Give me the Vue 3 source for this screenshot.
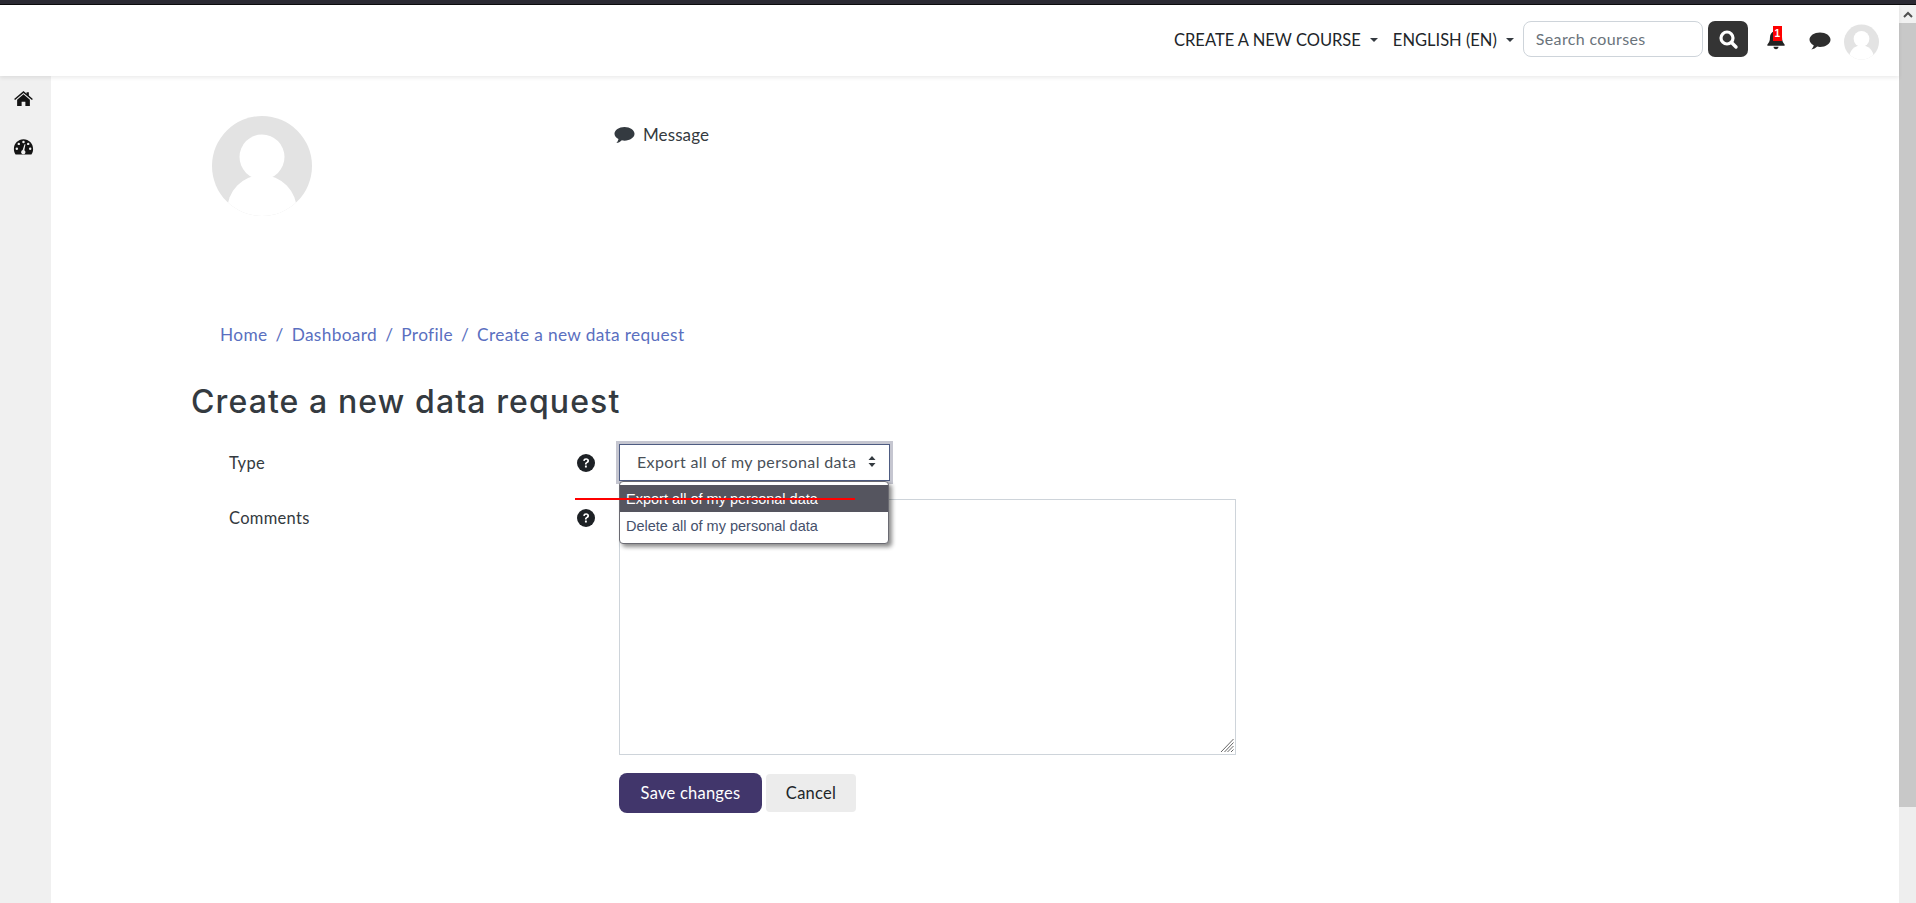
<script setup>
const crumbs = ['Home', 'Dashboard', 'Profile', 'Create a new data request']
</script>

<template>
  <div class="shell">
    <div class="strip"></div>
    <div class="body-row">
      <div class="page">
        <header class="navbar">
          <a class="nav-link">CREATE A NEW COURSE<span class="caret"></span></a>
          <a class="nav-link lang">ENGLISH (EN)<span class="caret"></span></a>
          <div class="search-box"><span>Search courses</span></div>
          <button class="search-btn" aria-label="Search">
            <svg width="22" height="22" viewBox="0 0 22 22"><circle cx="10" cy="10" r="6" fill="none" stroke="#fff" stroke-width="3.200"/><path d="M14.500 14.500l4.500 4.500" stroke="#fff" stroke-width="3.400" stroke-linecap="round"/></svg>
          </button>
          <div class="bell">
            <svg width="20" height="22" viewBox="0 0 20 23"><path d="M10 1.500c1 0 1.700.8 1.600 1.900 3 .7 4.700 3.200 4.700 6.300 0 4 .9 5.600 2.700 7.500v1.300H1v-1.300c1.800-1.900 2.700-3.500 2.700-7.500 0-3.100 1.700-5.600 4.700-6.300-.1-1.100.6-1.900 1.600-1.900z" fill="#222"/><path d="M7.400 19.500h5.200c0 1.500-1.100 2.600-2.600 2.600s-2.600-1.100-2.600-2.600z" fill="#222"/></svg>
            <span class="badge">1</span>
          </div>
          <svg class="chat" width="22" height="18" viewBox="0 0 22 18"><path d="M11 .5c5.800 0 10.500 3.200 10.500 7.200S16.800 14.900 11 14.900c-1 0-1.900-.1-2.800-.3C6.600 16.200 4.600 17.300 2.400 17.500c1.200-1.200 2-2.700 2.300-4.300C2.200 11.900.5 9.900.5 7.700.5 3.700 5.200.5 11 .5z" fill="#2e2e2e"/></svg>
          <svg class="nav-avatar" width="35" height="36" viewBox="0 0 100 100"><defs><clipPath id="nav-clip"><circle cx="50" cy="50" r="50"/></clipPath></defs><circle cx="50" cy="50" r="50" fill="#e3e3e3"/><g clip-path="url(#nav-clip)" fill="#fff"><circle cx="50" cy="41" r="22.500"/><ellipse cx="50" cy="95" rx="35" ry="36"/></g></svg>
        </header>
        <div class="below">
          <aside class="sidebar">
            <svg class="side-home" width="19" height="15" viewBox="0 0 20 16"><path d="M10 0l3.300 2.800V1.200h2.400v3.600L20 8.500l-1 1.100L10 2 1 9.600 0 8.500z" fill="#141414"/><path d="M10 3.400l6.800 5.800V16h-4.800v-4.500H8V16H3.200V9.200z" fill="#141414"/></svg>
            <svg class="side-gauge" width="21" height="16" viewBox="0 0 21 17"><path d="M10.500.3C4.800.3.300 4.900.3 10.500c0 2.200.6 4.200 1.800 6h16.800c1.200-1.800 1.800-3.800 1.800-6C20.700 4.900 16.200.3 10.500.3z" fill="#141414"/><g fill="#f0f0f0"><circle cx="10.500" cy="3.200" r="1.300"/><circle cx="5.500" cy="5.200" r="1.300"/><circle cx="15.500" cy="5.200" r="1.300"/><circle cx="3.400" cy="10.300" r="1.300"/><circle cx="17.600" cy="10.300" r="1.300"/><path d="M11.600 5.500l1 .2-1.200 6.300a2.300 2.300 0 1 1-1.800-.2z"/></g></svg>
          </aside>
          <main class="content">
            <div class="profile">
              <svg class="big-avatar" width="100" height="100" viewBox="0 0 100 100"><defs><clipPath id="big-clip"><circle cx="50" cy="50" r="50"/></clipPath></defs><circle cx="50" cy="50" r="50" fill="#e3e3e3"/><g clip-path="url(#big-clip)" fill="#fff"><circle cx="50" cy="41" r="22.500"/><ellipse cx="50" cy="95" rx="35" ry="36"/></g></svg>
              <a class="message">
                <svg width="21" height="18" viewBox="0 0 22 18"><path d="M11 .5c5.800 0 10.500 3.200 10.500 7.200S16.800 14.900 11 14.900c-1 0-1.900-.1-2.800-.3C6.600 16.200 4.600 17.300 2.400 17.500c1.200-1.200 2-2.700 2.300-4.300C2.200 11.900.5 9.900.5 7.700.5 3.700 5.200.5 11 .5z" fill="#343a40"/></svg>
                Message
              </a>
            </div>
            <nav class="crumbs">
              <template v-for="(c, i) in crumbs" :key="c">
                <span v-if="i" class="sep">/</span><a>{{ c }}</a>
              </template>
            </nav>
            <h1>Create a new data request</h1>
            <div class="form-row type-row">
              <label>Type</label>
              <svg class="help" width="18" height="18" viewBox="0 0 17 17"><circle cx="8.500" cy="8.500" r="8.500" fill="#1d2125"/><path d="M5.800 6.300c.2-1.500 1.300-2.300 2.800-2.300 1.600 0 2.800.9 2.800 2.300 0 1.200-.7 1.700-1.500 2.200-.6.400-.8.600-.8 1.300H7.500c0-1.300.4-1.800 1.200-2.300.6-.4 1-.7 1-1.200 0-.5-.5-.8-1.100-.8-.7 0-1.100.4-1.300 1z" fill="#fff"/><rect x="7.500" y="10.800" width="1.800" height="1.900" rx=".3" fill="#fff"/></svg>
              <div class="select-wrap">
                <div class="select">
                  <span>Export all of my personal data</span>
                  <svg width="10" height="13" viewBox="0 0 10 13"><path d="M5 1l3.500 4h-7zM5 12L1.500 8h7z" fill="#343a40"/></svg>
                </div>
                <ul class="popup">
                  <li class="active">Export all of my personal data</li>
                  <li>Delete all of my personal data</li>
                </ul>
                <div class="strike"></div>
              </div>
            </div>
            <div class="form-row">
              <label>Comments</label>
              <svg class="help" width="18" height="18" viewBox="0 0 17 17"><circle cx="8.500" cy="8.500" r="8.500" fill="#1d2125"/><path d="M5.800 6.300c.2-1.500 1.300-2.300 2.800-2.300 1.600 0 2.800.9 2.800 2.300 0 1.200-.7 1.700-1.500 2.200-.6.400-.8.600-.8 1.300H7.500c0-1.300.4-1.800 1.200-2.300.6-.4 1-.7 1-1.200 0-.5-.5-.8-1.100-.8-.7 0-1.100.4-1.300 1z" fill="#fff"/><rect x="7.500" y="10.800" width="1.800" height="1.900" rx=".3" fill="#fff"/></svg>
              <div class="textarea">
                <svg class="grip" width="14" height="15" viewBox="0 0 14 15"><path d="M13.500 1L1 14M13.500 4.500L4.500 14M13.500 8L7.500 14M13.500 11.500l-2.500 2.500" stroke="#666" stroke-width="1" fill="none"/></svg>
              </div>
            </div>
            <div class="actions">
              <button class="save">Save changes</button>
              <button class="cancel">Cancel</button>
            </div>
          </main>
        </div>
      </div>
      <div class="scrollbar">
        <div class="arrow"><svg width="10" height="7" viewBox="0 0 10 7"><path d="M1 6l4-4 4 4" fill="none" stroke="#505050" stroke-width="2"/></svg></div>
        <div class="thumb"></div>
      </div>
    </div>
  </div>
</template>

<style>
html, body { margin: 0; height: 100%; overflow: hidden; background: #fff; }
</style>

<style scoped>
.shell { width: 1916px; height: 903px; display: flex; flex-direction: column; overflow: hidden; font-family: Lato, "Noto Sans", sans-serif; color: #343a40; }
.strip { height: 4px; background: #2b2a33; border-bottom: 1px solid #0c0c0d; flex: none; }
.body-row { flex: 1; display: flex; min-height: 0; }
.page { flex: 1; display: flex; flex-direction: column; min-width: 0; }
.navbar { height: 71px; flex: none; display: flex; align-items: center; background: #fff; box-shadow: 0 2px 4px rgba(0,0,0,.08); position: relative; z-index: 2; padding: 0 0 3px 1174px; box-sizing: border-box; }
.nav-link { font-size: 16.500px; color: #212529; display: flex; align-items: center; white-space: nowrap; margin-top: 2px; }
.lang { margin-left: 15px; }
.caret { width: 0; height: 0; border-left: 4px solid transparent; border-right: 4px solid transparent; border-top: 4px solid #343a40; margin-left: 9px; }
.search-box { width: 180px; height: 36px; margin-left: 9px; box-sizing: border-box; border: 1px solid #ced4da; border-radius: 8px; font-size: 16px; letter-spacing: .35px; color: #6a737b; display: flex; align-items: center; padding: 0 0 2px 12px; }
.search-btn { width: 40px; height: 36px; margin-left: 5px; padding: 0; border: 0; border-radius: 7px; background: #343434; display: flex; align-items: center; justify-content: center; }
.bell { position: relative; margin-left: 18px; width: 20px; height: 22px; }
.badge { position: absolute; left: 7px; top: -2px; width: 9px; height: 15px; background: #f00; color: #fff; font-size: 10px; line-height: 15px; text-align: center; font-family: "Liberation Sans", sans-serif; font-weight: 700; }
.chat { margin: 4px 0 0 23px; }
.nav-avatar { margin: 6px 0 0 13px; }
.below { flex: 1; display: flex; min-height: 0; }
.sidebar { width: 51px; flex: none; background: #f0f0f0; display: flex; flex-direction: column; align-items: center; padding: 15px 4px 0 0; box-sizing: border-box; }
.side-gauge { margin-top: 33px; }
.content { flex: 1; padding: 40px 0 0 140px; box-sizing: border-box; min-width: 0; }
.profile { display: flex; align-items: flex-start; padding-left: 21px; height: 206px; }
.message { display: flex; align-items: center; gap: 8px; margin: 8px 0 0 302px; font-size: 17px; letter-spacing: .1px; }
.crumbs { display: flex; align-items: center; height: 24px; padding-left: 29px; font-size: 17.300px; letter-spacing: .35px; color: #5a6fc0; }
.sep { margin: 0 8px; }
h1 { margin: 36px 0 0; font-family: Inter, Lato, sans-serif; font-size: 32px; line-height: 40px; font-weight: 500; letter-spacing: 1.100px; color: #343a40; }
.form-row { display: flex; align-items: flex-start; margin-left: 38px; }
.form-row label { width: 348px; font-size: 16.500px; line-height: 24px; letter-spacing: .3px; color: #343a40; }
.form-row .help { margin-top: 3px; }
.type-row { margin-top: 29px; height: 55px; }
.select-wrap { position: relative; margin-left: 24px; }
.select { width: 271px; height: 37px; box-sizing: border-box; border: 1px solid #4e5c82; box-shadow: 0 0 0 3px #c5c6d0; margin-top: -7px; display: flex; align-items: center; justify-content: space-between; padding: 0 12px 2px 17px; font-size: 16px; letter-spacing: .37px; color: #495057; background: #fff; }
.popup { position: absolute; left: 0; top: 30px; margin: 0; padding: 3px 0 4px; list-style: none; width: 270px; box-sizing: border-box; background: #fff; border: 1px solid #6a6a72; border-radius: 4px; box-shadow: 3px 3px 4px rgba(0,0,0,.45); font-family: "Liberation Sans", sans-serif; font-size: 14.500px; color: #45506b; z-index: 3; }
.popup li { height: 27px; line-height: 29px; padding-left: 6px; }
.popup li.active { background: #55555f; color: #fff; }
.strike { position: absolute; left: -44px; top: 47px; width: 280px; height: 2px; background: #f00; z-index: 4; }
.textarea { position: relative; width: 617px; height: 256px; box-sizing: border-box; margin-left: 24px; margin-top: -7px; border: 1px solid #ced4da; background: #fff; }
.grip { position: absolute; right: 1px; bottom: 1px; }
.actions { display: flex; align-items: center; gap: 4px; margin: 18px 0 0 428px; }
.actions button { font-family: inherit; font-size: 16.500px; padding: 0; cursor: default; letter-spacing: .25px; }
.save { width: 143px; height: 40px; border: 0; border-radius: 8px; background: #41366b; color: #fff; }
.cancel { width: 90px; height: 38px; border: 0; border-radius: 4px; background: #ececec; color: #212529; }
.scrollbar { width: 17px; flex: none; background: #eee; display: flex; flex-direction: column; }
.arrow { height: 18px; display: flex; align-items: center; justify-content: center; background: #f1f1f1; }
.thumb { height: 784px; background: #c8c8c8; }
</style>
